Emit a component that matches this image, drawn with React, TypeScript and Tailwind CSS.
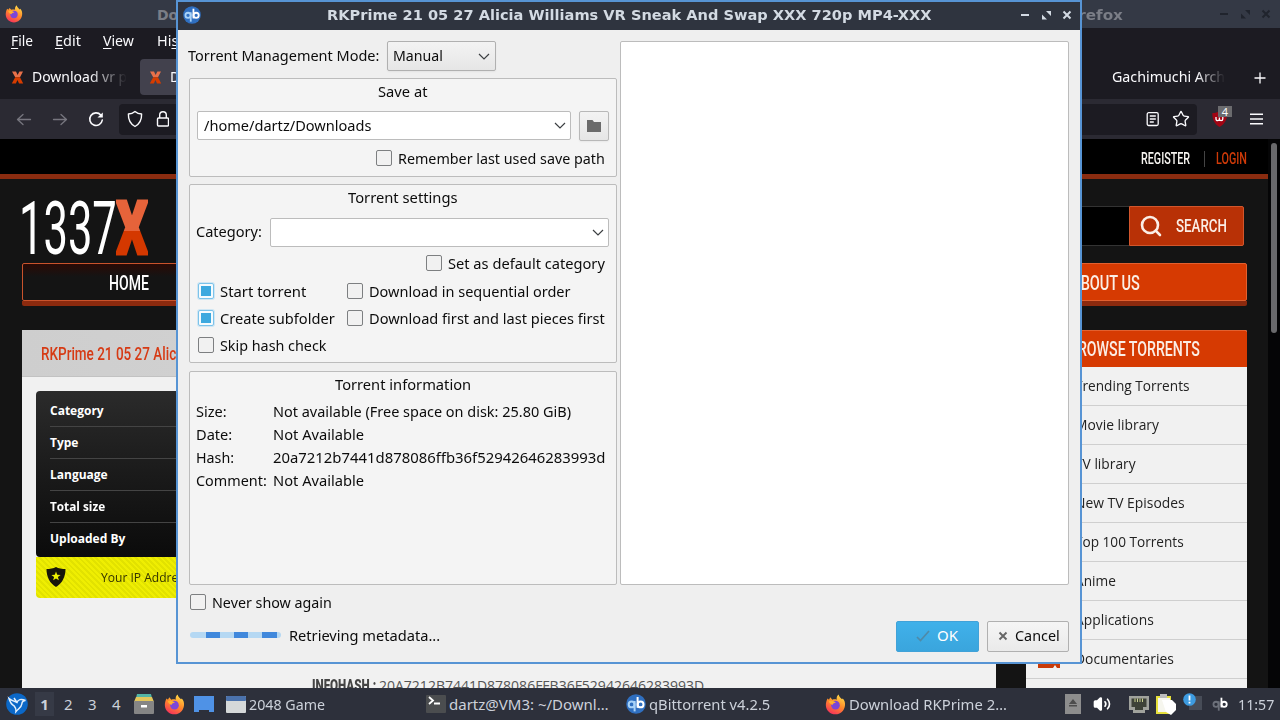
import React, { useLayoutEffect, useRef, useState } from "react";
import { Search, Star, Volume2 } from "lucide-react";

interface IFit {
  w: number;
  className?: string;
  textClass?: string;
  children: React.ReactNode;
}

// single line of text squeezed or stretched to a fixed width
const Fit: React.FC<IFit> = ({ w, className = "", textClass = "", children }) => {
  const ref = useRef<HTMLSpanElement>(null);
  const [scale, setScale] = useState(1);

  useLayoutEffect(() => {
    if (ref.current) setScale(w / ref.current.offsetWidth);
  }, [w]);

  return (
    <span className={`block shrink-0 ${className}`} style={{ width: w }}>
      <span
        ref={ref}
        className={`inline-block origin-left whitespace-nowrap align-top ${textClass}`}
        style={{ transform: `scaleX(${scale})` }}>
        {children}
      </span>
    </span>
  );
};

// dialog text, sits slightly above the middle of its row
const Label: React.FC<IFit> = ({ w, className = "", children }) => (
  <Fit w={w} className={`pb-0.5 ${className}`}>
    {children}
  </Fit>
);

const FirefoxIcon: React.FC<{ className?: string }> = ({ className }) => (
  <svg viewBox="0 0 20 20" className={className}>
    <defs>
      <linearGradient id="fox" x1="0.8" y1="0" x2="0.3" y2="1">
        <stop offset="0" stopColor="#ffe24a" />
        <stop offset="0.5" stopColor="#ff8a2a" />
        <stop offset="1" stopColor="#f5305c" />
      </linearGradient>
    </defs>
    <path
      d="M2.4 4.2 L3.8 5.4 L5 3.2 L7 5.4 C8.5 4.8 10 4.9 11.2 5.4 C10.8 3.4 11.4 1.6 13 0.4 C13.3 2.6 15 3.6 16.2 5 L16.9 4.2 C18.8 6 19.4 8.4 19 11.2 C18.4 16 14.6 19.4 10 19.4 C5 19.4 1 15.6 0.8 10.6 C0.8 8.2 1.4 6 2.4 4.2 Z"
      fill="url(#fox)"
    />
    <circle cx="10" cy="10.6" r="4.1" fill="#7b46d8" />
    <path d="M3.6 7 C6 6 8.6 6.6 10.4 8.4 C8.6 8.4 7.8 9.2 7 10.4 C5.4 9.8 4 8.6 3.6 7 Z" fill="#ffb02e" />
  </svg>
);

const QbIcon: React.FC<{ className?: string; plain?: boolean }> = ({
  className,
  plain,
}) => (
  <svg viewBox="0 0 20 20" className={className}>
    {!plain && <circle cx="10" cy="10" r="9.8" fill="#2f6fc0" />}
    <g fill="none" strokeWidth="2">
      <g stroke={plain ? "#6d717b" : "#a9d3f8"}>
        <circle cx="5.6" cy="10.4" r="2.9" />
        <path d="M8.6 7 V17.4" />
      </g>
      <g stroke="#ffffff">
        <circle cx="14.6" cy="10.4" r="2.9" />
        <path d="M11.6 3 V13.8" />
      </g>
    </g>
  </svg>
);

const TabX: React.FC = () => (
  <svg viewBox="0 0 13 13" className="h-[13px] w-[13px] shrink-0">
    <path d="M1 0.5 H5 L6.6 4 L8.4 0.5 H12 L9 6.3 H4.2 Z" fill="#e8714a" />
    <path d="M4.2 6.3 H9 L12.2 12.5 H8 L6.5 9 L4.8 12.5 H0.8 Z" fill="#d63c00" />
  </svg>
);

const Chevron: React.FC = () => (
  <svg viewBox="0 0 12 7" className="h-[7px] w-3 shrink-0">
    <path d="M1 1 L6 6 L11 1" fill="none" stroke="#3c3f42" strokeWidth="1.2" />
  </svg>
);

const WindowButtons: React.FC<{ className: string }> = ({ className }) => (
  <svg viewBox="0 0 52 12" className={`h-3 w-[52px] shrink-0 ${className}`}>
    <path d="M1 6 H9" stroke="currentColor" strokeWidth="2" />
    <path d="M26 2 H31 V7 Z M22 5.5 V10.5 H27 Z" fill="currentColor" />
    <path d="M43.5 2.5 L50.5 9.5 M50.5 2.5 L43.5 9.5" stroke="currentColor" strokeWidth="2" />
  </svg>
);

const CheckBox: React.FC<{ label: string; w: number; checked?: boolean }> = ({
  label,
  w,
  checked,
}) => (
  <div className="flex items-center gap-1.5">
    <span
      className={`mb-0.5 flex h-4 w-4 items-center justify-center rounded-xs border ${
        checked
          ? "border-[#7cc3ea] bg-[#f6fbfe] ring-1 ring-[#cfe6f3]"
          : "border-[#7d7f81] bg-[#f1f1f1]"
      }`}>
      {checked && <span className="h-2.5 w-2.5 bg-[#3da9df]" />}
    </span>
    <Label w={w}>{label}</Label>
  </div>
);

const details = [
  { name: "Category", w: 54 },
  { name: "Type", w: 28 },
  { name: "Language", w: 58 },
  { name: "Total size", w: 55 },
  { name: "Uploaded By", w: 75 },
];

const categories = [
  { name: "Trending Torrents", w: 115 },
  { name: "Movie library", w: 84 },
  { name: "TV library", w: 61 },
  { name: "New TV Episodes", w: 110 },
  { name: "Top 100 Torrents", w: 109 },
  { name: "Anime", w: 41 },
  { name: "Applications", w: 79 },
  { name: "Documentaries", w: 99 },
];

const info = [
  { name: "Size:", nw: 31, value: "Not available (Free space on disk: 25.80 GiB)", w: 298 },
  { name: "Date:", nw: 36, value: "Not Available", w: 91 },
  { name: "Hash:", nw: 38, value: "20a7212b7441d878086ffb36f52942646283993d", w: 332 },
  { name: "Comment:", nw: 71, value: "Not Available", w: 91 },
];

const BrowserChrome: React.FC = () => (
  <div className="font-['Noto_Sans',sans-serif] text-[#fbfbfe]">
    <div className="flex h-7 items-center bg-[#343945] font-['DejaVu_Sans',sans-serif] text-sm font-bold text-[#7b7e87]">
      <FirefoxIcon className="ml-[5px] h-[18px] w-[18px]" />
      <Fit w={78} className="ml-[134px] mt-0.5">Download</Fit>
      <Fit w={126} className="ml-[762px] mt-0.5">Mozilla Firefox</Fit>
      <WindowButtons className="ml-[96px] text-[#20242d]" />
    </div>
    <div className="flex h-[30px] items-center bg-[#1c1b22] pb-1.5 pl-[11px] text-[15px] leading-5">
      <Fit w={22}><u className="underline-offset-2">F</u>ile</Fit>
      <Fit w={26} className="ml-[22px]"><u className="underline-offset-2">E</u>dit</Fit>
      <Fit w={31} className="ml-[22px]"><u className="underline-offset-2">V</u>iew</Fit>
      <Fit w={49} className="ml-[23px]">Hi<u className="underline-offset-2">s</u>tory</Fit>
    </div>
    <div className="flex h-[41px] bg-[#1c1b22] text-[15px] leading-5">
      <div className="flex h-[38px] w-[128px] items-center pl-[11px]">
        <TabX />
        <Fit w={95} className="mb-0.5 ml-2 mask-r-from-60% mask-r-to-100%">Download vr p</Fit>
      </div>
      <div className="ml-3 mt-px flex h-9 w-60 items-center rounded bg-[#42414d] pl-[9px]">
        <TabX />
        <Fit w={66} className="mb-0.5 ml-2">Download</Fit>
      </div>
      <div className="ml-[694px] h-[38px] w-[38px] pt-2 text-[#3c3b44]">k</div>
      <Fit w={113} className="mt-2 mask-r-from-75% mask-r-to-100%">Gachimuchi Arch</Fit>
      <svg viewBox="0 0 12 12" className="mt-[14px] ml-[29px] h-3 w-3">
        <path d="M6 0.5 V11.5 M0.5 6 H11.5" stroke="#fbfbfe" strokeWidth="1.3" />
      </svg>
    </div>
    <div className="flex h-10 items-center bg-[#2b2a33]">
      <svg viewBox="0 0 90 18" className="ml-4 h-[18px] w-[90px]" fill="none" strokeLinecap="round" strokeLinejoin="round">
        <g stroke="#77767f" strokeWidth="1.3">
          <path d="M14.5 9.5 H1.5 M7 4.5 L1.5 9.5 L7 14.5" />
          <path d="M37.5 9.5 H50.5 M45 4.5 L50.5 9.5 L45 14.5" />
        </g>
        <path d="M84.8 5 A6.3 6.3 0 1 0 86.3 10" stroke="#fbfbfe" strokeWidth="1.6" />
        <path d="M86.8 2.4 V7.6 H81.5 Z" fill="#fbfbfe" />
      </svg>
      <div className="ml-[13px] flex h-[31px] w-[1078px] items-center rounded bg-[#1c1b22]">
        <svg viewBox="0 0 42 18" className="ml-2 h-[18px] w-[42px]" fill="none" stroke="#fbfbfe" strokeWidth="1.4" strokeLinejoin="round">
          <path d="M8 1.5 C10 3.2 12 3.9 14.6 4 C14.8 9.5 12.8 13.8 8 16.5 C3.2 13.8 1.2 9.5 1.4 4 C4 3.9 6 3.2 8 1.5 Z" />
          <rect x="30.5" y="8" width="11" height="8" rx="1" />
          <path d="M32.7 8 V5 A3.3 3.3 0 0 1 39.3 5 V8" />
        </svg>
        <svg viewBox="0 0 14 16" className="ml-auto h-4 w-[14px]" fill="none" stroke="#fbfbfe" strokeWidth="1.3">
          <rect x="1.2" y="1.7" width="11" height="12.8" rx="1.5" />
          <path d="M3.8 5 H9.8 M3.8 8 H9.8 M3.8 11 H7.8" />
        </svg>
        <Star className="mr-[7px] ml-3 h-[18px] w-[18px] text-[#fbfbfe]" strokeWidth={1.8} />
      </div>
      <div className="relative ml-[15px] h-[18px] w-4">
        <svg viewBox="0 0 16 18" className="h-[18px] w-4">
          <path d="M7.5 1 C9.5 2.4 11.5 3 15 3 C15.4 9 13 14 7.5 17 C2.5 14 0 9 0.4 3 C3.5 3 5.5 2.4 7.5 1 Z" fill="#a00514" />
          <path d="M4 7 V9 A1.7 1.7 0 0 0 7.4 9 V7.5 M7.4 9 A1.7 1.7 0 0 0 10.8 9 V7" fill="none" stroke="#ffffff" strokeWidth="1.3" />
        </svg>
        <span className="absolute -top-1 left-[6px] h-[11px] w-[14px] bg-[#6b6b6e] text-center text-[11px] leading-[11px]">
          4
        </span>
      </div>
      <svg viewBox="0 0 13 12" className="ml-[22px] h-3 w-[13px]">
        <path d="M0 1.2 H13 M0 6 H13 M0 10.8 H13" stroke="#fbfbfe" strokeWidth="1.4" />
      </svg>
    </div>
  </div>
);

const SitePage: React.FC = () => (
  <div className="flex min-h-0 flex-1 overflow-hidden">
    <div className="flex w-[1268px] flex-col bg-[#141414] font-['Roboto',sans-serif]">
      <div className="flex h-10 shrink-0 items-center border-b-[5px] border-[#8a2c10] bg-black pt-1 text-base leading-5 font-medium">
        <Fit w={49} className="ml-[1141px] text-[#f5f3ef]">REGISTER</Fit>
        <span className="ml-[14px] h-4 w-px bg-[#444]" />
        <Fit w={31} className="ml-[11px] text-[#cf3a08]">LOGIN</Fit>
      </div>
      <div className="flex h-[84px] shrink-0">
        <div className="ml-[19px] flex pt-[17px] text-[75px] leading-[64px] text-white">
          <Fit w={98}>1337</Fit>
          <Fit
            w={32}
            className="-ml-px font-black"
            textClass="bg-linear-to-b from-[#e6633a] from-55% to-[#d43800] to-55% bg-clip-text text-transparent [-webkit-text-stroke:3px_transparent]">
            X
          </Fit>
        </div>
        <div className="mr-6 ml-auto mt-[27px] flex h-10 w-[400px]">
          <div className="flex-1 border border-r-0 border-[#333] bg-black" />
          <div className="flex w-[115px] items-center rounded-r-xs border border-[#d2562c] bg-[#b83106]">
            <Search className="ml-[9px] h-6 w-6 text-[#fbeee6]" strokeWidth={2.6} />
            <Fit w={51} className="ml-[13px] text-lg leading-5 font-medium text-[#fbeee6]">SEARCH</Fit>
          </div>
        </div>
      </div>
      <div className="mr-[21px] ml-[22px] flex h-[43px] shrink-0 rounded-xs border-b-[5px] border-[#8c2a0e] text-xl leading-6 font-medium">
        <div className="flex w-[213px] items-center justify-center rounded-xs border border-[#c9532c] bg-[linear-gradient(#2a0a05,#141414_35%)] pt-0.5">
          <Fit w={40} className="text-white">HOME</Fit>
        </div>
        <div className="flex flex-1 items-center justify-end rounded-xs border border-[#e2602f] bg-[#d63a02] pt-0.5 pr-[106px]">
          <Fit w={69} className="text-[#fbeee6]">ABOUT US</Fit>
        </div>
      </div>
      <div className="mt-6 mr-[21px] ml-[22px] flex flex-1 justify-between">
        <div className="w-[974px] rounded-t-xs bg-[#f1f1f1]">
          <div className="flex h-[47px] items-center border-b border-[#c2c2c2] bg-linear-to-r from-[#cecece] to-[#dadada] pt-px pl-[19px] text-lg leading-5 font-medium">
            <Fit w={201} className="text-[#d63a14]">RKPrime 21 05 27 Alicia Williams</Fit>
          </div>
          <div className="mt-[14px] ml-[14px] w-[700px] font-['Open_Sans',sans-serif]">
            <div className="rounded bg-linear-to-b from-[#2b2b2b] to-[#0b0b0b] px-[14px] pt-1 pb-0.5">
              {details.map((item) => (
                <div
                  key={item.name}
                  className="flex h-8 items-center border-b border-[#444] text-xs font-bold text-white last:border-0">
                  <Fit w={item.w}>{item.name}</Fit>
                </div>
              ))}
            </div>
            <div className="flex h-[41px] items-center rounded-b bg-[repeating-linear-gradient(45deg,#efee02_0_2px,#e2e200_2px_4px)] pb-0.5">
              <svg viewBox="0 0 20 20" className="ml-2.5 h-5 w-5">
                <path d="M10 0 C12.5 1.6 16 2 19.5 2 C19.5 10 16 16.5 10 20 C4 16.5 0.5 10 0.5 2 C4 2 7.5 1.6 10 0 Z" fill="#17150a" />
                <path d="M10 4.5 L11.2 7.8 L14.6 7.9 L11.9 10 L12.9 13.3 L10 11.4 L7.1 13.3 L8.1 10 L5.4 7.9 L8.8 7.8 Z" fill="#eef000" />
              </svg>
              <Fit w={89} className="mt-0.5 ml-[35px] text-[13px] text-[#333300]">Your IP Address</Fit>
            </div>
          </div>
          <div className="mt-[76px] ml-[290px] flex items-center text-base leading-6 text-[#555]">
            <Fit w={64} className="font-black text-[#444]">INFOHASH :</Fit>
            <Fit w={325} className="ml-[3px] font-['Open_Sans',sans-serif] text-sm leading-6">
              20A7212B7441D878086FFB36F52942646283993D
            </Fit>
          </div>
        </div>
        <div className="w-[221px] rounded-t-xs bg-[#f1f1f1]">
          <div className="flex h-[37px] items-center rounded-t-xs border-t border-[#e2602f] bg-[#d63a02] pl-[43px] text-xl leading-6 font-medium">
            <Fit w={131} className="text-[#fbeee6]">BROWSE TORRENTS</Fit>
          </div>
          {categories.map((item) => (
            <div
              key={item.name}
              className="flex h-[39px] items-center border-b border-[#cfcfcf] font-['Open_Sans',sans-serif] text-sm text-[#222]">
              <svg viewBox="0 0 24 20" className="ml-[11px] h-5 w-6">
                <path d="M1 1 H17 L23 7 V19 H20 L18 16 L16 19 H1 Z" fill="#c83a08" />
              </svg>
              <Fit w={item.w} className="ml-[14px]">{item.name}</Fit>
            </div>
          ))}
        </div>
      </div>
    </div>
    <div className="flex-1 bg-[#050506] pt-1 pl-[3px]">
      <div className="h-[190px] w-1.5 rounded-full bg-[#6a6a6c]" />
    </div>
  </div>
);

const groupStyle = "rounded-xs border border-[#bcbcbc] bg-[#f4f4f4]";

const TorrentDialog: React.FC = () => (
  <div className="absolute top-0 left-44 flex h-[664px] w-[906px] flex-col border-2 border-[#5794d4] bg-[#efefef] font-['Noto_Sans',sans-serif] text-[15px] leading-5 text-[#0c0c0c]">
    <div className="flex h-7 items-center bg-[#2f343f] pb-0.5 font-['DejaVu_Sans',sans-serif] text-sm font-bold text-[#d3dae3]">
      <QbIcon className="ml-[5px] h-[18px] w-[18px]" />
      <Fit w={604} className="ml-[126px]">
        RKPrime 21 05 27 Alicia Williams VR Sneak And Swap XXX 720p MP4-XXX
      </Fit>
      <WindowButtons className="ml-[89px]" />
    </div>
    <div className="flex h-[555px] pt-[11px] pl-[11px]">
      <div className="w-[428px]">
        <div className="-ml-px flex h-[30px] items-center">
          <Label w={191}>Torrent Management Mode:</Label>
          <div className="ml-2 flex h-[30px] w-[109px] items-center justify-between rounded-xs border border-[#b0b0b0] bg-linear-to-b from-[#f3f3f3] to-[#e6e6e6] pr-[5px] pl-[5px] shadow-xs">
            <Label w={50}>Manual</Label>
            <Chevron />
          </div>
        </div>
        <div className={`mt-[7px] h-[99px] px-[7px] pt-0.5 ${groupStyle}`}>
          <div className="flex justify-center pr-0.5">
            <Label w={49}>Save at</Label>
          </div>
          <div className="mt-2 flex h-[30px] justify-between">
            <div className="flex h-[29px] w-[374px] items-center justify-between rounded-xs border border-[#bcbcbc] bg-white pr-1 pl-1.5">
              <Label w={167}>/home/dartz/Downloads</Label>
              <Chevron />
            </div>
            <div className="flex w-[30px] items-center justify-center rounded-xs border border-[#b8b8b8] bg-linear-to-b from-[#f3f3f3] to-[#e6e6e6] shadow-xs">
              <svg viewBox="0 0 14 12" className="h-3 w-[14px]">
                <path d="M0 0 H5.5 L7 2 H14 V12 H0 Z" fill="#6b6b6b" />
              </svg>
            </div>
          </div>
          <div className="mt-[7px] flex justify-end pr-1">
            <CheckBox w={207} label="Remember last used save path" />
          </div>
        </div>
        <div className={`mt-[7px] h-[179px] px-1.5 pt-0.5 ${groupStyle}`}>
          <div className="flex justify-center pr-px">
            <Label w={110}>Torrent settings</Label>
          </div>
          <div className="mt-2 flex h-[30px] items-center gap-2">
            <Label w={66}>Category:</Label>
            <div className="flex h-[29px] w-[339px] items-center justify-end rounded-xs border border-[#bcbcbc] bg-white pr-1">
              <Chevron />
            </div>
          </div>
          <div className="mt-1.5 flex justify-end pr-[5px]">
            <CheckBox w={157} label="Set as default category" />
          </div>
          <div className="mt-1.5 grid grid-cols-[149px_1fr] gap-y-[5px] pl-0.5">
            <CheckBox w={86} label="Start torrent" checked />
            <CheckBox w={202} label="Download in sequential order" />
            <CheckBox w={115} label="Create subfolder" checked />
            <CheckBox w={236} label="Download first and last pieces first" />
            <CheckBox w={106} label="Skip hash check" />
          </div>
        </div>
        <div className={`mt-2 h-[214px] px-1.5 pt-0.5 ${groupStyle}`}>
          <div className="mb-1 flex justify-center pr-px">
            <Label w={136}>Torrent information</Label>
          </div>
          {info.map((item) => (
            <div key={item.name} className="flex h-[23px] items-center">
              <div className="w-[77px]">
                <Label w={item.nw}>{item.name}</Label>
              </div>
              <Label w={item.w}>{item.value}</Label>
            </div>
          ))}
        </div>
      </div>
      <div className="ml-[3px] h-[544px] w-[449px] rounded-xs border border-[#bcbcbc] bg-white" />
    </div>
    <div className="mt-[7px] ml-3">
      <CheckBox w={120} label="Never show again" />
    </div>
    <div className="mt-1.5 flex h-8 items-center pr-[11px] pl-3">
      <div className="mb-0.5 h-1.5 w-[91px] rounded-full bg-[repeating-linear-gradient(90deg,#b5d8f3_0_16px,#4088dc_16px_30px,#b5d8f3_30px_44px,#4088dc_44px_58px,#b5d8f3_58px_72px,#4088dc_72px_87px,#b5d8f3_87px_91px)]" />
      <Label w={151} className="ml-2">Retrieving metadata...</Label>
      <div className="ml-auto flex h-[31px] w-[83px] items-center rounded-xs border border-[#41a2d8] bg-linear-to-b from-[#40b1ea] to-[#3aa5dd] pl-[19px] text-white">
        <svg viewBox="0 0 14 12" className="h-3 w-[14px]">
          <path d="M1 7 L4.5 10.5 L13 1" fill="none" stroke="#4f8aa8" strokeWidth="1.7" />
        </svg>
        <Label w={21} className="ml-[7px]">OK</Label>
      </div>
      <div className="ml-2 flex h-[31px] w-[82px] items-center rounded-xs border border-[#b0b0b0] bg-linear-to-b from-[#f5f5f5] to-[#eaeaea] pl-2.5">
        <svg viewBox="0 0 10 10" className="h-2.5 w-2.5">
          <path d="M1.5 1.5 L8.5 8.5 M8.5 1.5 L1.5 8.5" stroke="#666" strokeWidth="1.9" />
        </svg>
        <Label w={45} className="ml-[7px]">Cancel</Label>
      </div>
    </div>
  </div>
);

const Taskbar: React.FC = () => (
  <div className="flex h-8 shrink-0 items-center bg-[#2d303b] pl-px font-['Noto_Sans',sans-serif] text-[15px] leading-5 text-[#ccd1da]">
    <svg viewBox="0 0 22 22" className="ml-[5px] h-[22px] w-[22px]">
      <circle cx="11" cy="11" r="10.8" fill="#0b68c8" />
      <path
        d="M3 5.5 C6 8 9 8.5 11 9.5 C12 6.5 15 5.5 19.5 7.5 C16.5 7.5 16 9 15.8 11 C15.5 14.5 12.5 15.5 10 18.5 C10.5 15.5 9 14 8 12.8 C5.5 11.5 4 9 3 5.5 Z M8 5 L11 9.5"
        fill="none"
        stroke="#e4f0fc"
        strokeWidth="1.5"
      />
    </svg>
    <div className="ml-[7px] flex h-6 w-[19px] items-center justify-center bg-[#363a46] font-bold">1</div>
    <span className="ml-[10px] w-2">2</span>
    <span className="ml-4 w-2">3</span>
    <span className="ml-4 w-2">4</span>
    <svg viewBox="0 0 20 20" className="ml-[14px] h-5 w-5">
      <path d="M3 0 H17 L18 4 H2 Z" fill="#53b5a5" />
      <path d="M2 3 H18 L20 8 H0 Z" fill="#e3c65c" />
      <rect y="7" width="20" height="13" rx="1" fill="#858585" />
      <rect x="7" y="11" width="6" height="2.5" fill="#ffffff" />
    </svg>
    <FirefoxIcon className="ml-2.5 h-[21px] w-[21px]" />
    <svg viewBox="0 0 20 17" className="ml-[9px] h-[17px] w-5">
      <path d="M0 0 H20 V16 H15 V14 H5 V16 H0 Z" fill="#4f92e6" />
    </svg>
    <svg viewBox="0 0 20 17" className="ml-3 h-[17px] w-5">
      <rect width="20" height="17" rx="1" fill="#d5d8d9" />
      <rect width="20" height="5" rx="1" fill="#4b72ac" />
    </svg>
    <Fit w={76} className="ml-[3px]">2048 Game</Fit>
    <svg viewBox="0 0 20 18" className="ml-[101px] h-[18px] w-5">
      <rect width="20" height="18" rx="1" fill="#4b4d4f" />
      <path d="M3 2 L7 5.5 L3 9 M8 8.5 H14" fill="none" stroke="#ffffff" strokeWidth="1.8" />
    </svg>
    <Fit w={160} className="ml-[3px]">dartz@VM3: ~/Downl…</Fit>
    <QbIcon className="ml-[17px] h-5 w-5" />
    <Fit w={121} className="ml-[3px]">qBittorrent v4.2.5</Fit>
    <FirefoxIcon className="ml-[55px] h-[21px] w-[21px]" />
    <Fit w={158} className="ml-[3px]">Download RKPrime 2…</Fit>
    <svg viewBox="0 0 16 20" className="ml-[58px] h-5 w-4">
      <rect width="16" height="20" fill="#8d8d8d" />
      <path d="M8 5 L12 10 H4 Z M4 11 H12 V12.5 H4 Z" fill="#4c4c4c" />
    </svg>
    <Volume2 className="ml-3 h-[18px] w-[18px] text-white [&>path:first-child]:fill-white" strokeWidth={2.2} />
    <svg viewBox="0 0 20 17" className="ml-[18px] h-[17px] w-5">
      <path d="M0 0 H20 V14 H16 V17 H4 V14 H0 Z" fill="#a0a29c" />
      <path d="M2.5 2.5 H17.5 V11 H14 V14 H6 V11 H2.5 Z" fill="#3e4238" />
      <path d="M6 2.5 V6 M8.5 2.5 V6 M11 2.5 V6 M13.5 2.5 V6" stroke="#c9cf8f" />
    </svg>
    <svg viewBox="0 0 20 21" className="ml-[7px] h-[21px] w-5">
      <rect y="2" width="15" height="18" fill="#e6e03c" />
      <rect x="2" y="4" width="12" height="14" fill="#f6f6ee" />
      <rect x="4" width="7" height="4" fill="#bdbdbd" />
      <path d="M6 6 H16 L20 10 V16 L15 21 L10 18 Z" fill="#ffffff" />
    </svg>
    <svg viewBox="0 0 20 18" className="mb-1 ml-[7px] h-[18px] w-5">
      <rect x="6" y="3" width="13" height="14" fill="#474c57" />
      <circle cx="6.5" cy="6.5" r="6.3" fill="#3d9be0" />
      <path d="M6.5 2.5 V7.5 M6.5 8.8 V10.6" stroke="#ffffff" strokeWidth="1.8" />
    </svg>
    <QbIcon plain className="ml-2 h-[18px] w-[18px]" />
    <Fit w={36} className="ml-[9px]">11:57</Fit>
  </div>
);

const App: React.FC = () => {
  return (
    <div className="relative flex h-[720px] w-[1280px] flex-col overflow-hidden bg-black">
      <BrowserChrome />
      <SitePage />
      <TorrentDialog />
      <Taskbar />
    </div>
  );
};

export default App;
